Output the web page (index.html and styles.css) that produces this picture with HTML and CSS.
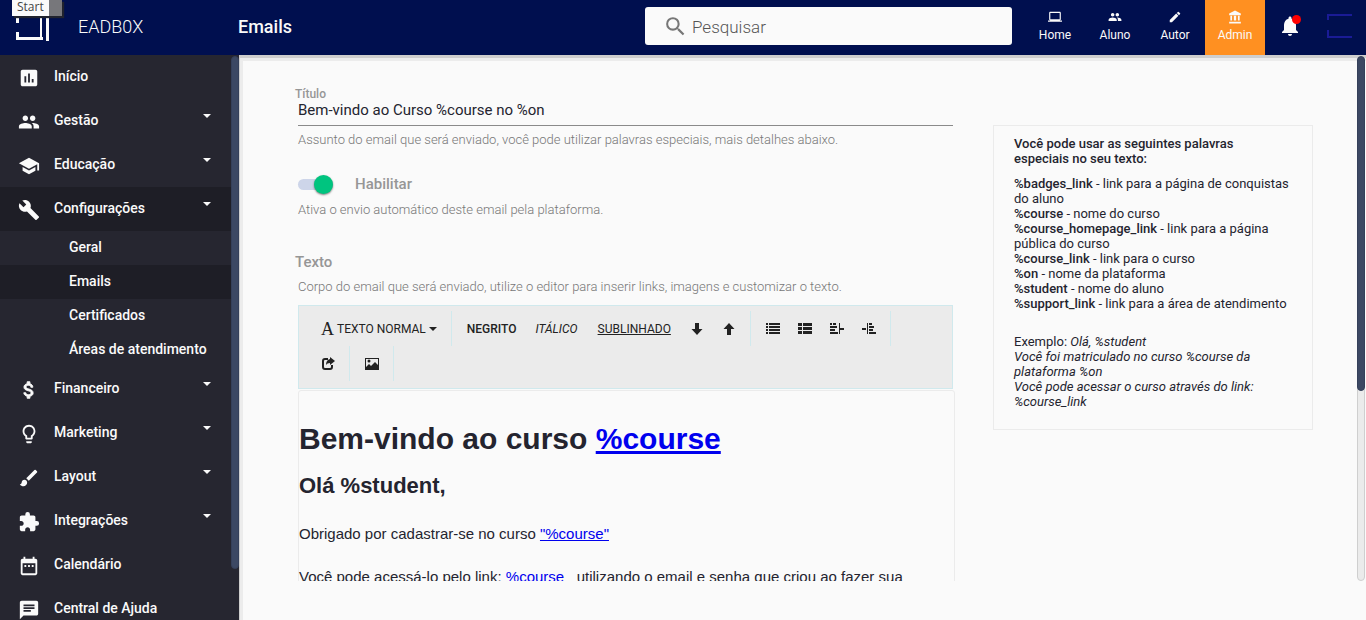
FILE: index.html
```html
<!DOCTYPE html>
<html lang="pt-BR">
<head>
    <meta charset="UTF-8">
    <meta name="viewport" content="width=device-width, initial-scale=1.0">
    <title>Emails - EADB0X</title>
    <link rel="stylesheet" href="styles.css">
</head>
<body>
    <div class="start-tip">Start</div>

    <header class="topbar">
        <a class="brand" href="#">
            <svg class="brand-logo" width="34" height="26" viewBox="0 0 34 26" fill="none" stroke="#fafafa"><path stroke-width="3" d="M1.500 8V2M1.500 17v7M0 23.500h27"/><path stroke-width="2" d="M0 2h25v22"/><path stroke-width="3" d="M31.500 0v26"/></svg>
            EADB0X
        </a>
        <h1 class="page-title">Emails</h1>
        <label class="search">
            <svg width="25" height="25" viewBox="0 0 24 24"><path d="M15.500 14h-.79l-.28-.27A6.470 6.470 0 0 0 16 9.500 6.500 6.500 0 1 0 9.500 16c1.610 0 3.090-.59 4.230-1.570l.27.28v.79l5 4.990L20.490 19l-4.990-5zm-6 0C7.010 14 5 11.990 5 9.500S7.010 5 9.500 5 14 7.010 14 9.500 11.990 14 9.500 14z"/></svg>
            <input type="text" placeholder="Pesquisar" aria-label="Pesquisar">
        </label>
        <nav class="modes">
            <a href="#">
                <svg viewBox="0 0 24 24"><path d="M20 18c1.100 0 1.990-.9 1.990-2L22 5c0-1.100-.9-2-2-2H4c-1.100 0-2 .9-2 2v11c0 1.100.9 2 2 2H0v2h24v-2h-4zM4 5h16v11H4V5z"/></svg>
                Home
            </a>
            <a href="#">
                <svg viewBox="0 0 24 24"><path d="M16 11c1.660 0 2.990-1.340 2.990-3S17.660 5 16 5s-3 1.340-3 3 1.340 3 3 3zm-8 0c1.660 0 2.990-1.340 2.990-3S9.660 5 8 5 5 6.340 5 8s1.340 3 3 3zm0 2c-2.330 0-7 1.170-7 3.500V19h14v-2.500c0-2.330-4.670-3.500-7-3.500zm8 0c-.29 0-.62.020-.97.050 1.160.84 1.970 1.970 1.970 3.450V19h6v-2.500c0-2.330-4.670-3.500-7-3.500z"/></svg>
                Aluno
            </a>
            <a href="#">
                <svg viewBox="0 0 24 24"><path d="M3 17.250V21h3.750L17.810 9.940l-3.750-3.750L3 17.250zM20.710 7.040a1 1 0 0 0 0-1.410l-2.340-2.340a1 1 0 0 0-1.410 0l-1.830 1.830 3.750 3.750 1.830-1.830z"/></svg>
                Autor
            </a>
            <a class="current" href="#">
                <svg viewBox="0 0 24 24"><path d="M4 10v8h3v-8H4zm6 0v8h4v-8h-4zM2 23h20v-3H2v3zm15-13v8h3v-8h-3zM12 1 2 6v3h20V6L12 1z"/></svg>
                Admin
            </a>
        </nav>
        <button class="bell" type="button" aria-label="Notificações">
            <svg width="24" height="24" viewBox="0 0 24 24"><path d="M12 22c1.100 0 2-.9 2-2h-4c0 1.100.9 2 2 2zm6-6v-5c0-3.070-1.640-5.640-4.500-6.320V4c0-.83-.67-1.500-1.500-1.500s-1.500.67-1.500 1.500v.68C7.630 5.360 6 7.920 6 11v5l-2 2v1h16v-1l-2-2z"/></svg>
            <span class="bell-dot"></span>
        </button>
        <a class="avatar" href="#" aria-label="Perfil">
            <svg width="26" height="26" viewBox="0 0 26 26" fill="none" stroke="#1a1b96" stroke-width="2"><path d="M1 7V2h24M1 17v7h24"/></svg>
        </a>
    </header>

    <div class="layout">
        <aside class="sidebar">
            <nav class="menu">
                <a class="menu-item" href="#">
                    <svg viewBox="0 0 24 24"><path d="M19 3H5c-1.100 0-2 .9-2 2v14c0 1.100.9 2 2 2h14c1.100 0 2-.9 2-2V5c0-1.100-.9-2-2-2zM9 17H7v-7h2v7zm4 0h-2V7h2v10zm4 0h-2v-4h2v4z"/></svg>
                    <span>Início</span>
                </a>
                <a class="menu-item has-sub" href="#">
                    <svg viewBox="0 0 24 24"><path d="M16 11c1.660 0 2.990-1.340 2.990-3S17.660 5 16 5s-3 1.340-3 3 1.340 3 3 3zm-8 0c1.660 0 2.990-1.340 2.990-3S9.660 5 8 5 5 6.340 5 8s1.340 3 3 3zm0 2c-2.330 0-7 1.170-7 3.500V19h14v-2.500c0-2.330-4.670-3.500-7-3.500zm8 0c-.29 0-.62.020-.97.050 1.160.84 1.970 1.970 1.970 3.450V19h6v-2.500c0-2.330-4.670-3.500-7-3.500z"/></svg>
                    <span>Gestão</span>
                </a>
                <a class="menu-item has-sub" href="#">
                    <svg viewBox="0 0 24 24"><path d="M5 13.180v4L12 21l7-3.820v-4L12 17l-7-3.820zM12 3 1 9l11 6 9-4.910V17h2V9L12 3z"/></svg>
                    <span>Educação</span>
                </a>
                <a class="menu-item has-sub open" href="#">
                    <svg viewBox="0 0 24 24"><path d="m22.700 19-9.100-9.100c.9-2.300.4-5-1.500-6.900-2-2-5-2.400-7.400-1.300L9 6 6 9 1.600 4.700C.4 7.100.9 10.100 2.900 12.100c1.900 1.900 4.600 2.400 6.900 1.500l9.100 9.100c.4.4 1 .4 1.400 0l2.300-2.300c.5-.4.5-1.100.1-1.400z"/></svg>
                    <span>Configurações</span>
                </a>
                <a class="sub-item" href="#">Geral</a>
                <a class="sub-item active" href="#">Emails</a>
                <a class="sub-item" href="#">Certificados</a>
                <a class="sub-item" href="#">Áreas de atendimento</a>
                <a class="menu-item has-sub" href="#">
                    <svg viewBox="0 0 24 24"><path stroke="currentColor" d="M11.800 10.900c-2.270-.59-3-1.200-3-2.150 0-1.090 1.010-1.850 2.700-1.850 1.780 0 2.440.85 2.500 2.100h2.210c-.07-1.720-1.120-3.300-3.210-3.810V3h-3v2.160c-1.940.42-3.500 1.680-3.500 3.610 0 2.310 1.910 3.460 4.700 4.130 2.500.6 3 1.480 3 2.410 0 .69-.49 1.790-2.700 1.790-2.060 0-2.870-.92-2.980-2.100h-2.200c.12 2.190 1.760 3.420 3.680 3.830V21h3v-2.150c1.950-.37 3.500-1.500 3.500-3.550 0-2.840-2.430-3.810-4.700-4.400z"/></svg>
                    <span>Financeiro</span>
                </a>
                <a class="menu-item has-sub" href="#">
                    <svg viewBox="0 0 24 24"><path d="M9 21c0 .55.45 1 1 1h4c.55 0 1-.45 1-1v-1H9v1zm3-19C8.140 2 5 5.140 5 9c0 2.380 1.190 4.470 3 5.740V17c0 .55.45 1 1 1h6c.55 0 1-.45 1-1v-2.260c1.810-1.270 3-3.360 3-5.740 0-3.860-3.140-7-7-7zm2.850 11.100-.85.600V16h-4v-2.300l-.85-.6A5 5 0 1 1 17 9c0 1.630-.8 3.160-2.150 4.100z"/></svg>
                    <span>Marketing</span>
                </a>
                <a class="menu-item has-sub" href="#">
                    <svg viewBox="0 0 24 24"><path d="M7 14c-1.660 0-3 1.340-3 3 0 1.310-1.160 2-2 2 .92 1.220 2.490 2 4 2 2.210 0 4-1.790 4-4 0-1.660-1.340-3-3-3zm13.710-9.370-1.340-1.340a1 1 0 0 0-1.410 0L9 12.250 11.750 15l8.960-8.960a1 1 0 0 0 0-1.410z"/></svg>
                    <span>Layout</span>
                </a>
                <a class="menu-item has-sub" href="#">
                    <svg viewBox="0 0 24 24"><path d="M20.500 11H19V7c0-1.100-.9-2-2-2h-4V3.500a2.500 2.500 0 0 0-5 0V5H4c-1.100 0-1.990.9-1.990 2v3.800H3.500c1.490 0 2.700 1.210 2.700 2.700s-1.210 2.700-2.700 2.700H2V20c0 1.100.9 2 2 2h3.800v-1.500c0-1.490 1.210-2.700 2.700-2.700s2.700 1.210 2.700 2.700V22H17c1.100 0 2-.9 2-2v-4h1.500a2.500 2.500 0 0 0 0-5z"/></svg>
                    <span>Integrações</span>
                </a>
                <a class="menu-item" href="#">
                    <svg viewBox="0 0 24 24"><path d="M9 11H7v2h2v-2zm4 0h-2v2h2v-2zm4 0h-2v2h2v-2zm2-7h-1V2h-2v2H8V2H6v2H5c-1.110 0-1.990.9-1.990 2L3 20c0 1.100.89 2 2 2h14c1.100 0 2-.9 2-2V6c0-1.100-.9-2-2-2zm0 16H5V9h14v11z"/></svg>
                    <span>Calendário</span>
                </a>
                <a class="menu-item" href="#">
                    <svg viewBox="0 0 24 24"><path d="M20 2H4c-1.100 0-1.990.9-1.990 2L2 22l4-4h14c1.100 0 2-.9 2-2V4c0-1.100-.9-2-2-2zM6 9h12v2H6V9zm8 5H6v-2h8v2zm4-6H6V6h12v2z"/></svg>
                    <span>Central de Ajuda</span>
                </a>
            </nav>
            <div class="scrollbar side-scroll"><div class="thumb"></div></div>
        </aside>

        <main class="main">
            <div class="content">
                <form class="form">
                    <label class="title-label" for="titulo">Título</label>
                    <input class="title-input" type="text" id="titulo" value="Bem-vindo ao Curso %course no %on">
                    <p class="hint">Assunto do email que será enviado, você pode utilizar palavras especiais, mais detalhes abaixo.</p>

                    <label class="switch">
                        <input type="checkbox" role="switch" checked>
                        Habilitar
                    </label>
                    <p class="hint">Ativa o envio automático deste email pela plataforma.</p>

                    <h2 class="text-label" id="texto">Texto</h2>
                    <p class="hint">Corpo do email que será enviado, utilize o editor para inserir links, imagens e customizar o texto.</p>

                    <div class="toolbar">
                        <div class="group">
                            <button type="button"><span class="font-a">A</span> Texto normal <i class="caret"></i></button>
                        </div>
                        <div class="group">
                            <button type="button"><b>Negrito</b></button>
                            <button type="button"><em>Itálico</em></button>
                            <button type="button"><u>Sublinhado</u></button>
                            <button type="button" aria-label="Diminuir"><svg viewBox="0 0 14 14"><path d="M5 1h4v6h3.500L7 13 1.500 7H5z"/></svg></button>
                            <button type="button" aria-label="Aumentar"><svg viewBox="0 0 14 14"><path d="M5 13h4V7h3.500L7 1 1.500 7H5z"/></svg></button>
                        </div>
                        <div class="group">
                            <button type="button" aria-label="Lista"><svg viewBox="0 0 14 14"><path d="M0 1h2v2H0zM3 1h11v2H3zM0 4h2v2H0zM3 4h11v2H3zM0 7h2v2H0zM3 7h11v2H3zM0 10h2v2H0zM3 10h11v2H3z"/></svg></button>
                            <button type="button" aria-label="Lista numerada"><svg viewBox="0 0 14 14"><path d="M0 1h4v3H0zM5 1h9v3H5zM0 5h4v3H0zM5 5h9v3H5zM0 9h4v3H0zM5 9h9v3H5z"/></svg></button>
                            <button type="button" aria-label="Diminuir recuo"><svg viewBox="0 0 14 14"><path d="M0 1h2v2H0zM3 1h3v2H3zM0 4h7v2H0zM0 7h5v2H0zM0 10h8v2H0zM9 1h1v11H9zM10 6h4v2h-4z"/></svg></button>
                            <button type="button" aria-label="Aumentar recuo"><svg viewBox="0 0 14 14"><path d="M7 1h3v2H7zM7 4h5v2H7zM7 7h4v2H7zM7 10h7v2H7zM5 1h1v11H5zM0 6h4v2H0z"/></svg></button>
                        </div>
                        <div class="group">
                            <button type="button" aria-label="Inserir link"><svg viewBox="0 0 14 14"><path d="M7 2H4Q2 2 2 4v6q0 2 2 2h5q2 0 2-2V8" fill="none" stroke="#222" stroke-width="2"/><path d="M9 0l5 4-5 4V6Q6 6 5 8q0-5 4-6z"/></svg></button>
                        </div>
                        <div class="group">
                            <button type="button" aria-label="Inserir imagem"><svg viewBox="0 0 14 14"><path fill-rule="evenodd" d="M0 1h14v12H0zM1 2v8l3-3 2 2 4-4 3 3V2z"/><circle cx="4" cy="4" r="1.500"/></svg></button>
                        </div>
                    </div>
                    <div class="editor" contenteditable="true" role="textbox" aria-labelledby="texto" spellcheck="false">
                        <h1>Bem-vindo ao curso <a href="#">%course</a></h1>
                        <h2>Olá %student,</h2>
                        <p>Obrigado por cadastrar-se no curso <a href="#">"%course"</a></p>
                        <p>Você pode acessá-lo pelo link: <a href="#">%course_</a> utilizando o email e senha que criou ao fazer sua</p>
                    </div>
                </form>

                <aside class="help">
                    <h3>Você pode usar as seguintes palavras especiais no seu texto:</h3>
                    <ul>
                        <li><b>%badges_link</b> - link para a página de conquistas do aluno</li>
                        <li><b>%course</b> - nome do curso</li>
                        <li><b>%course_homepage_link</b> - link para a página pública do curso</li>
                        <li><b>%course_link</b> - link para o curso</li>
                        <li><b>%on</b> - nome da plataforma</li>
                        <li><b>%student</b> - nome do aluno</li>
                        <li><b>%support_link</b> - link para a área de atendimento</li>
                    </ul>
                    <p>Exemplo: <em>Olá, %student<br>Você foi matriculado no curso %course da plataforma %on<br>Você pode acessar o curso através do link: %course_link</em></p>
                </aside>
            </div>
            <div class="scrollbar main-scroll"><div class="thumb"></div></div>
        </main>
    </div>
</body>
</html>
```
FILE: styles.css
```css
* {
    box-sizing: border-box;
}
body {
    margin: 0;
    height: 100vh;
    display: flex;
    flex-direction: column;
    overflow: hidden;
    font-family: Roboto, "Liberation Sans", sans-serif;
    font-size: 13px;
    color: #24242f;
    background: #fafafa;
}
a {
    color: inherit;
    text-decoration: none;
}
button,
input {
    font: inherit;
    color: inherit;
    border: 0;
    background: none;
}
h1, h2, h3, p, ul {
    margin: 0;
}
svg {
    fill: currentColor;
    flex: none;
}

/* top bar */
.topbar {
    display: flex;
    align-items: center;
    flex: none;
    height: 55px;
    padding-bottom: 3px;
    color: #fafafa;
    background: #000f4f;
}
.brand {
    display: flex;
    align-items: center;
    gap: 28px;
    width: 238px;
    padding-left: 16px;
    font-size: 18px;
    font-weight: 300;
}
.brand-logo {
    fill: none;
    margin-top: 3px;
}
.page-title {
    flex: 1;
    font-size: 18px;
    font-weight: 500;
}
.search {
    display: flex;
    align-items: center;
    flex: 0 1 367px;
    height: 38px;
    margin-right: 13px;
    padding-left: 18px;
    border-radius: 3px;
    background: #fafafa;
    color: #777;
}
.search input {
    flex: 1;
    min-width: 0;
    padding: 2px 4px 0;
    font-size: 17px;
    font-weight: 300;
    outline: none;
}
.search input::placeholder {
    color: #555;
}
.modes {
    display: flex;
    align-self: flex-start;
    height: 55px;
}
.modes a {
    display: flex;
    flex-direction: column;
    align-items: center;
    gap: 4px;
    width: 60px;
    padding-top: 10px;
    font-size: 12px;
}
.modes svg {
    width: 14px;
    height: 14px;
}
.modes .current {
    background: #ff9021;
}
.bell {
    position: relative;
    width: 50px;
    height: 52px;
    padding: 0;
}
.bell svg {
    display: block;
    margin: 0 auto;
}
.bell-dot {
    position: absolute;
    top: 15px;
    right: 14px;
    width: 9px;
    height: 9px;
    border-radius: 50%;
    background: #f00;
}
.avatar {
    width: 51px;
    padding-left: 12px;
}
.avatar svg {
    display: block;
    fill: none;
}
.start-tip {
    position: absolute;
    top: 0;
    left: 12px;
    height: 16px;
    padding: 0 5px;
    border-right: 13px solid #77777b;
    background: #fafafa;
    box-shadow: 2px 2px 1px #20232e;
    color: #444;
    font: 12px/13px "Open Sans", sans-serif;
}

/* sidebar */
.layout {
    display: flex;
    flex: 1;
    min-height: 0;
}
.sidebar {
    display: flex;
    flex: none;
    width: 239px;
    overflow: hidden;
    background: #262630;
    color: #fafafa;
}
.menu {
    flex: 1;
    font-size: 14px;
    font-weight: 500;
}
.menu-item {
    display: flex;
    align-items: center;
    gap: 14px;
    height: 44px;
    padding-left: 18px;
}
.menu-item span {
    padding-bottom: 2px;
}
.menu-item svg {
    width: 22px;
    height: 22px;
    margin-top: 2px;
}
.has-sub::after {
    content: "";
    margin: 0 20px 10px auto;
    border: 4px solid transparent;
    border-top-color: #fafafa;
    border-bottom: 0;
}
.menu .open,
.menu .active {
    background: #1e1e26;
}
.sub-item {
    display: block;
    padding-left: 69px;
    line-height: 32px;
    padding-bottom: 2px;
}
.scrollbar {
    flex: none;
    width: 8px;
    margin-top: 1px;
}
.scrollbar .thumb {
    border-radius: 4px;
    background: #3c4863;
    border: 1px solid #35405a;
}
.side-scroll .thumb {
    height: 91%;
}

/* content */
.main {
    display: flex;
    flex: 1;
    min-width: 0;
    padding-right: 1px;
    padding-bottom: 39px;
    box-shadow: inset 1px 3px #cecece, inset 4px 6px #ececec;
}
.content {
    display: flex;
    align-items: flex-start;
    gap: 40px;
    flex: 1;
    min-width: 0;
    overflow: hidden;
    padding: 31px 44px 0 56px;
}
.main-scroll {
    border: 1px solid #cfcfcf;
    border-radius: 4px;
    background: #ebebeb;
}
.main-scroll .thumb {
    height: 64%;
    margin: -1px;
}
.form {
    flex: 1;
    min-width: 0;
    padding-left: 3px;
}
.title-label {
    display: block;
    margin-left: -3px;
    font-size: 12px;
    font-weight: 500;
    line-height: 16px;
    color: #969696;
}
.title-input {
    display: block;
    width: 100%;
    height: 24px;
    padding: 0 0 8px;
    border-bottom: 1px solid #8a8a8a;
    font-size: 15px;
    outline: none;
}
.hint {
    font-weight: 300;
    line-height: 16px;
    color: #777;
}
.title-input + .hint {
    margin-top: 6px;
}
.switch {
    display: flex;
    align-items: center;
    gap: 22px;
    height: 22px;
    margin: 25px 0 7px;
    font-size: 15px;
    font-weight: 500;
    color: #969696;
}
.switch input {
    appearance: none;
    display: flex;
    align-items: center;
    justify-content: flex-end;
    width: 35px;
    height: 11px;
    margin: 0;
    border-radius: 6px;
    background: #cdd5e9;
}
.switch input::before {
    content: "";
    width: 19px;
    height: 19px;
    border-radius: 50%;
    background: #00c47f;
    box-shadow: 0 1px 2px rgba(0, 0, 0, 0.5);
}
.text-label {
    margin: 34px 0 7px -3px;
    font-size: 15px;
    font-weight: 500;
    line-height: 20px;
    color: #969696;
}
.toolbar {
    display: flex;
    flex-wrap: wrap;
    margin-top: 10px;
    padding: 5px 24px 7px 7px;
    border: 1px solid #d0e9ed;
    background: #ebebeb;
    color: #222;
}
.group {
    display: flex;
    height: 35px;
    padding: 0 5px 0 6px;
    border-right: 1px solid #d0e9ed;
}
.group button {
    display: flex;
    align-items: center;
    gap: 3px;
    padding: 0 9px;
    font-size: 12px;
    text-transform: uppercase;
}
.group svg {
    width: 14px;
    height: 14px;
}
.group b {
    font-weight: 500;
}
.group em,
.group u {
    padding: 0 1px;
}
.font-a {
    font: 18px/20px "Liberation Serif", serif;
}
.caret {
    border: 4px solid transparent;
    border-top-color: #222;
    border-bottom: 0;
}
.editor {
    margin: 1px -2px 0 0;
    padding-top: 30px;
    border: 1px solid #ebebeb;
    border-radius: 3px;
    font: 15px/20px "Liberation Sans", Arial, sans-serif;
    outline: none;
}
.editor a {
    color: #00e;
    text-decoration: underline;
}
.editor h1 {
    font-size: 30px;
    line-height: 36px;
}
.editor h2 {
    margin-top: 14px;
    font-size: 22px;
    line-height: 30px;
}
.editor p {
    margin-top: 23px;
}

.help {
    flex: none;
    width: 320px;
    margin-top: 39px;
    padding: 10px 22px 20px 20px;
    border: 1px solid #ebebeb;
    line-height: 15px;
}
.help h3 {
    margin-bottom: 10px;
    font-size: 13px;
    font-weight: 500;
}
.help ul {
    padding: 0;
    list-style: none;
}
.help b {
    font-weight: 500;
}
.help p {
    margin-top: 23px;
}
```
